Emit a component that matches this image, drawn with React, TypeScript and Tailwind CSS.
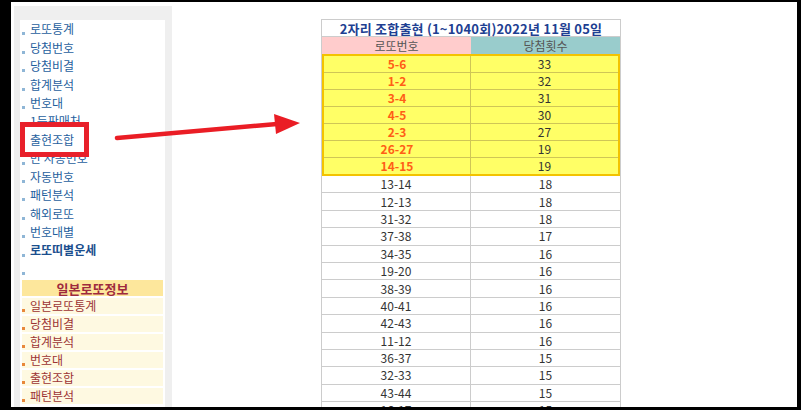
import React from 'react';

const KR = '"Noto Sans CJK KR", "Noto Sans", sans-serif';

const mainMenu = [
  '로또통계',
  '당첨번호',
  '당첨비결',
  '합계분석',
  '번호대',
  '1등판매처',
  '출현조합',
  '반 자동번호',
  '자동번호',
  '패턴분석',
  '해외로또',
  '번호대별',
];

const jpMenu = ['일본로또통계', '당첨비결', '합계분석', '번호대', '출현조합', '패턴분석'];

const topRows: [string, number][] = [
  ['5-6', 33],
  ['1-2', 32],
  ['3-4', 31],
  ['4-5', 30],
  ['2-3', 27],
  ['26-27', 19],
  ['14-15', 19],
];

const restRows: [string, number][] = [
  ['13-14', 18],
  ['12-13', 18],
  ['31-32', 18],
  ['37-38', 17],
  ['34-35', 16],
  ['19-20', 16],
  ['38-39', 16],
  ['40-41', 16],
  ['42-43', 16],
  ['11-12', 16],
  ['36-37', 15],
  ['32-33', 15],
  ['43-44', 15],
  ['16-17', 15],
];

function MenuItem({ label, bold }: { label?: string; bold?: boolean }) {
  return (
    <div className="flex h-[18.45px] items-center pl-[2px]">
      <span className="mb-[3px] mr-[5px] h-[3px] w-[3px] shrink-0 self-end bg-[#8fb6d6]" />
      {label && (
        <span
          className={`text-[12px] leading-none whitespace-nowrap ${
            bold ? 'font-bold text-[#1b4f8e]' : 'text-[#1f5f9e]'
          }`}
        >
          {label}
        </span>
      )}
    </div>
  );
}

function Sidebar() {
  return (
    <div className="ml-[3px] mt-[4px] w-[158px] shrink-0 bg-[#efefef] px-[6px] pr-[7px] pt-[14px]">
      <div className="h-[420px] bg-white">
        {mainMenu.map((m) => (
          <MenuItem key={m} label={m} />
        ))}
        <MenuItem label="로또띠별운세" bold />
        <MenuItem />

        <div className="mt-[2px] flex flex-col gap-[2px] px-[2px]">
          <div className="flex h-[16px] items-center justify-center bg-[#fde79c] text-[13px] font-bold leading-none text-[#9e2a3e]">
            일본로또정보
          </div>
          {jpMenu.map((m, i) => (
            <div key={i} className="flex h-[16px] items-center bg-[#fef9e1]">
              <span className="mb-[2px] mr-[5px] h-[3px] w-[3px] shrink-0 self-end bg-[#e8883a]" />
              <span className="text-[12px] leading-none text-[#9c3434]">{m}</span>
            </div>
          ))}
        </div>
      </div>
    </div>
  );
}

function ResultTable() {
  return (
    <div className="ml-[149px] mt-[17px] w-[300px] shrink-0 self-start border border-[#cccccc]">
      <div className="flex h-[17px] items-center justify-center border-b border-[#cccccc] text-[13px] font-bold leading-none tracking-[0.2px] text-[#1e3f92]">
        2자리 조합출현 (1~1040회)2022년 11월 05일
      </div>
      <div className="grid h-[17px] grid-cols-[149px_1fr] text-[12px] leading-none text-[#555555]">
        <div className="flex items-center justify-center bg-[#ffcccc]">로또번호</div>
        <div className="flex items-center justify-center bg-[#99cccc]">당첨횟수</div>
      </div>
      <div className="flex h-[122px] flex-col border-2 border-[#f3c300] bg-[#ffff66]">
        {topRows.map(([pair, n], i) => (
          <div
            key={pair}
            className={`grid flex-1 grid-cols-[147px_1fr] ${i > 0 ? 'border-t border-[#cfc656]' : ''}`}
          >
            <div className="flex items-center justify-center border-r border-[#cfc656] text-[12px] font-bold leading-none text-[#ff5e17]">
              {pair}
            </div>
            <div className="flex items-center justify-center text-[12px] leading-none text-[#333333]">{n}</div>
          </div>
        ))}
      </div>
      {restRows.map(([pair, n]) => (
        <div key={pair} className="grid h-[17.4px] grid-cols-[149px_1fr] border-b border-[#cccccc]">
          <div className="flex items-center justify-center border-r border-[#cccccc] text-[12px] leading-none text-[#333333]">
            {pair}
          </div>
          <div className="flex items-center justify-center text-[12px] leading-none text-[#333333]">{n}</div>
        </div>
      ))}
    </div>
  );
}

export default function App() {
  return (
    <div className="h-[410px] w-[801px] bg-black pb-[3px] pl-[11px] pr-[4px] pt-[2px]" style={{ fontFamily: KR }}>
      <div className="relative flex h-full overflow-hidden bg-white">
        <Sidebar />
        <ResultTable />

        {/* red highlight box */}
        <div className="absolute left-[9px] top-[120px] h-[35px] w-[69px] border-[5px] border-[#e8202a]" />

        {/* arrow */}
        <svg className="absolute left-0 top-0" width="790" height="405" viewBox="0 0 790 405">
          <line x1="106" y1="136" x2="266" y2="122" stroke="#ea1d25" strokeWidth="4.5" strokeLinecap="round" />
          <polygon points="263,112 289,121 265,132" fill="#ea1d25" />
        </svg>
      </div>
    </div>
  );
}
